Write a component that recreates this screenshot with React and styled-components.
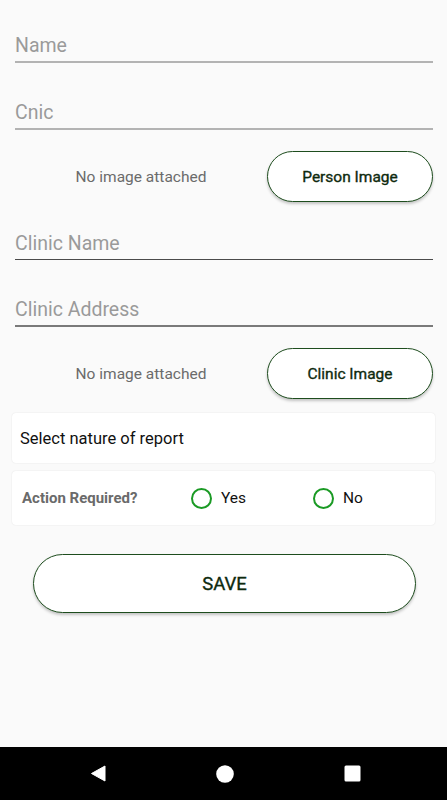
import React from "react";
import styled, { createGlobalStyle } from "styled-components";

const GlobalStyle = createGlobalStyle`
  html, body {
    margin: 0;
    padding: 0;
    background: #fafafa;
    font-family: Roboto, "Liberation Sans", sans-serif;
  }
`;

const Screen = styled.div`
  width: 447px;
  height: 800px;
  display: flex;
  flex-direction: column;
  background: #fafafa;
`;

const Form = styled.div`
  flex: 1;
  display: flex;
  flex-direction: column;
  padding: 0 14px 0 15px;
`;

const Field = styled.div`
  height: 40px;
  margin-top: ${(p) => p.top}px;
  display: flex;
  align-items: flex-end;
  box-sizing: border-box;
  padding-bottom: 4px;
  border-bottom: ${(p) => p.line || "2px solid #b3b3b3"};
  font-size: 19.5px;
  line-height: 23px;
  color: #9a9a9a;
`;

const AttachRow = styled.div`
  display: flex;
  align-items: center;
  margin-top: ${(p) => p.top}px;
  height: 51px;
`;

const AttachNote = styled.div`
  flex: 1;
  text-align: center;
  font-size: 15.5px;
  color: #6b6b6b;
`;

const PillButton = styled.button`
  box-sizing: border-box;
  width: ${(p) => p.w}px;
  height: ${(p) => p.h}px;
  border: 1.5px solid #1e4d1e;
  border-radius: ${(p) => p.h / 2}px;
  background: #ffffff;
  color: #0e2a0e;
  font-family: Roboto, "Liberation Sans", sans-serif;
  font-weight: 400;
  -webkit-text-stroke: 0.35px #0e2a0e;
  font-size: ${(p) => p.size}px;
  box-shadow: 0 2px 3px rgba(0, 0, 0, 0.22);
  padding: 0;
`;

const Card = styled.div`
  box-sizing: border-box;
  height: ${(p) => p.h}px;
  margin: ${(p) => p.top}px -2px 0 -3px;
  background: #ffffff;
  border-radius: 4px;
  box-shadow: 0 0 1.5px rgba(0, 0, 0, 0.12);
  display: flex;
  align-items: center;
  padding-left: ${(p) => p.pad}px;
`;

const SelectText = styled.span`
  font-size: 16.5px;
  color: #111;
`;

const Question = styled.span`
  width: 169px;
  font-size: 15px;
  font-weight: 700;
  color: #6a6a6a;
`;

const Option = styled.label`
  display: flex;
  align-items: center;
  width: 122px;
  font-size: 15.5px;
  color: #111;
`;

const Radio = styled.span`
  box-sizing: border-box;
  width: 21px;
  height: 21px;
  border-radius: 50%;
  border: 2.2px solid #1a9a24;
  margin-right: 9px;
`;

const SaveWrap = styled.div`
  display: flex;
  justify-content: flex-start;
  margin-top: 29px;
  padding-left: 18px;
`;

const NavBar = styled.div`
  height: 53px;
  background: #000;
  display: flex;
  align-items: center;
  justify-content: center;
  gap: 110px;
  padding-left: 3px;
`;

const NavIcon = styled.svg`
  display: block;
`;

function AttachmentRow({ top, label }) {
  return (
    <AttachRow top={top}>
      <AttachNote>No image attached</AttachNote>
      <PillButton w={166} h={51} size={15.5}>{label}</PillButton>
    </AttachRow>
  );
}

export default function App() {
  return (
    <Screen>
      <GlobalStyle />
      <Form>
        <Field top={23}>Name</Field>
        <Field top={27}>Cnic</Field>
        <AttachmentRow top={21} label="Person Image" />
        <Field top={18} line="1.5px solid #4a4a4a">Clinic Name</Field>
        <Field top={27} line="2px solid #7a7a7a">Clinic Address</Field>
        <AttachmentRow top={21} label="Clinic Image" />
        <Card top={14} h={50} pad={8}>
          <SelectText>Select nature of report</SelectText>
        </Card>
        <Card top={8} h={54} pad={10}>
          <Question>Action Required?</Question>
          <Option>
            <Radio />
            Yes
          </Option>
          <Option>
            <Radio />
            No
          </Option>
        </Card>
        <SaveWrap>
          <PillButton w={383} h={59} size={18.5}>SAVE</PillButton>
        </SaveWrap>
      </Form>
      <NavBar>
        <NavIcon width="16" height="17" viewBox="0 0 16 17">
          <path d="M15 1 L15 16 L1.5 8.5 Z" fill="#fff" strokeLinejoin="round" stroke="#fff" strokeWidth="1" />
        </NavIcon>
        <NavIcon width="18" height="18" viewBox="0 0 18 18">
          <circle cx="9" cy="9" r="8.8" fill="#fff" />
        </NavIcon>
        <NavIcon width="17" height="17" viewBox="0 0 17 17">
          <rect x="0.5" y="0.5" width="16" height="16" rx="1.5" fill="#fff" />
        </NavIcon>
      </NavBar>
    </Screen>
  );
}
